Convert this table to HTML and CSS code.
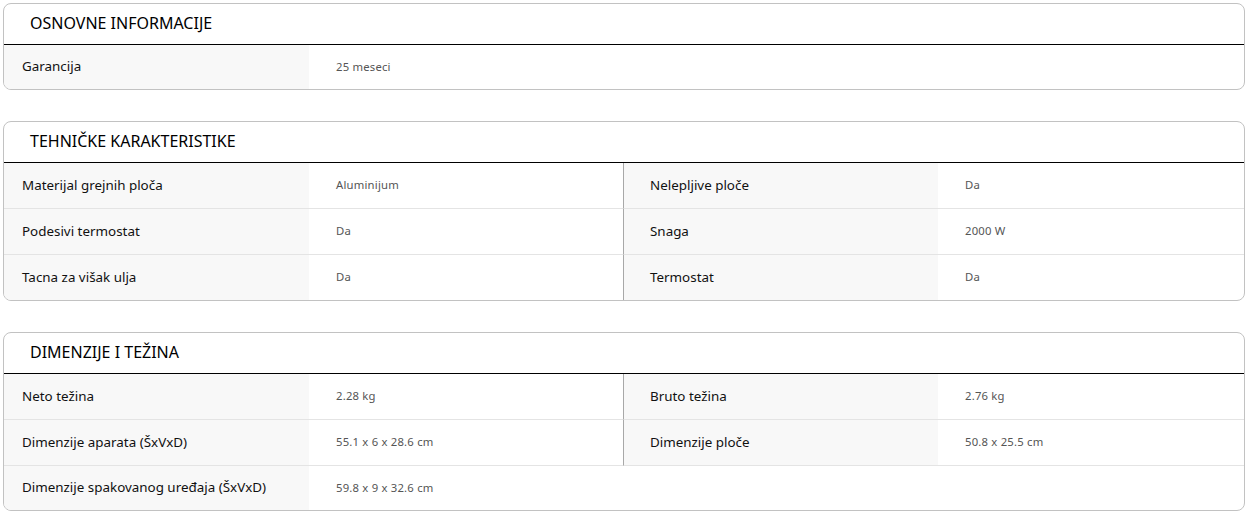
FILE: index.html
```html
<!DOCTYPE html>
<html lang="sr">
<head>
<meta charset="utf-8">
<link rel="stylesheet" href="styles.css">
</head>
<body>
<section class="spec-box">
  <h2 class="spec-title">OSNOVNE INFORMACIJE</h2>
  <div class="spec-grid single">
    <div class="cell label last">Garancija</div>
    <div class="cell value last">25 meseci</div>
  </div>
</section>

<section class="spec-box">
  <h2 class="spec-title">TEHNIČKE KARAKTERISTIKE</h2>
  <div class="spec-grid">
    <div class="cell label">Materijal grejnih ploča</div>
    <div class="cell value">Aluminijum</div>
    <div class="cell label right">Nelepljive ploče</div>
    <div class="cell value">Da</div>

    <div class="cell label">Podesivi termostat</div>
    <div class="cell value">Da</div>
    <div class="cell label right">Snaga</div>
    <div class="cell value">2000 W</div>

    <div class="cell label last">Tacna za višak ulja</div>
    <div class="cell value last">Da</div>
    <div class="cell label right last">Termostat</div>
    <div class="cell value last">Da</div>
  </div>
</section>

<section class="spec-box">
  <h2 class="spec-title">DIMENZIJE I TEŽINA</h2>
  <div class="spec-grid">
    <div class="cell label">Neto težina</div>
    <div class="cell value">2.28 kg</div>
    <div class="cell label right">Bruto težina</div>
    <div class="cell value">2.76 kg</div>

    <div class="cell label">Dimenzije aparata (ŠxVxD)</div>
    <div class="cell value">55.1 x 6 x 28.6 cm</div>
    <div class="cell label right">Dimenzije ploče</div>
    <div class="cell value">50.8 x 25.5 cm</div>

    <div class="cell label last short">Dimenzije spakovanog uređaja (ŠxVxD)</div>
    <div class="cell value last short">59.8 x 9 x 32.6 cm</div>
    <div class="cell empty last short"></div>
  </div>
</section>
</body>
</html>
```

FILE: styles.css
```css
* { box-sizing: border-box; }

body {
  margin: 0;
  padding: 3px 3px 0 3px;
  background: #ffffff;
  font-family: "Noto Sans", "DejaVu Sans", sans-serif;
  color: #111111;
}

.spec-box {
  border: 1px solid #c2c2c2;
  border-radius: 8px;
  overflow: hidden;
  margin-bottom: 31px;
  background: #ffffff;
}

.spec-box:last-child {
  margin-bottom: 0;
}

.spec-title {
  margin: 0;
  height: 41px;
  padding: 0 0 2px 26px;
  display: flex;
  align-items: center;
  font-size: 16px;
  font-weight: 400;
  color: #000000;
  border-bottom: 1px solid #000000;
}

.spec-grid {
  display: grid;
  grid-template-columns: 305px 314px 315px 1fr;
}

.spec-grid.single {
  grid-template-columns: 305px 1fr;
}

.cell {
  height: 46px;
  display: flex;
  align-items: center;
  padding-bottom: 2px;
  border-bottom: 1px solid #e4e4e4;
}

.cell.last {
  border-bottom: none;
  height: 45px;
}

.cell.short { height: 44px; }

.spec-grid.single .cell { height: 44px; }

.label {
  background: #f8f8f8;
  padding-left: 18px;
  font-size: 13.4px;
  color: #111111;
}

.label.right {
  border-left: 1px solid #a8a8a8;
  padding-left: 26px;
}

.value {
  padding-left: 27px;
  font-size: 11.3px;
  color: #555555;
  letter-spacing: 0.2px;
}

.empty {
  grid-column: span 2;
}
```
